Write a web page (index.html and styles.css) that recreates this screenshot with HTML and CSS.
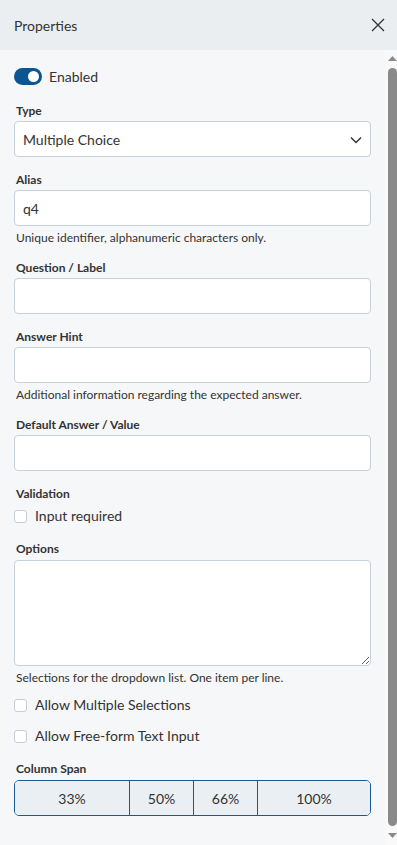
FILE: index.html
```html
<!DOCTYPE html>
<html lang="en">
<head>
    <meta charset="UTF-8">
    <meta name="viewport" content="width=device-width, initial-scale=1.0">
    <title>Properties</title>
    <link rel="stylesheet" href="styles.css">
</head>
<body>
    <div class="panel">
        <div class="panel-header">
            <span class="panel-title">Properties</span>
            <button class="close-btn" aria-label="Close">
                <svg width="14" height="14" viewBox="0 0 14 14">
                    <path d="M1 1L13 13M13 1L1 13" stroke="#333" stroke-width="1.3" fill="none"/>
                </svg>
            </button>
        </div>
        <div class="panel-main">
            <div class="panel-body">
                <label class="toggle-row">
                    <span class="toggle on"><span class="knob"></span></span>
                    <span>Enabled</span>
                </label>

                <div class="field">
                    <div class="field-label">Type</div>
                    <div class="select-wrap">
                        <select class="input">
                            <option>Multiple Choice</option>
                        </select>
                        <svg class="chevron" width="12" height="8" viewBox="0 0 12 8">
                            <path d="M1 1.5L6 6.5L11 1.5" stroke="#333" stroke-width="1.5" fill="none"/>
                        </svg>
                    </div>
                </div>

                <div class="field">
                    <div class="field-label">Alias</div>
                    <input class="input" type="text" value="q4">
                    <div class="help">Unique identifier, alphanumeric characters only.</div>
                </div>

                <div class="field">
                    <div class="field-label">Question / Label</div>
                    <input class="input" type="text">
                </div>

                <div class="field">
                    <div class="field-label">Answer Hint</div>
                    <input class="input" type="text">
                    <div class="help">Additional information regarding the expected answer.</div>
                </div>

                <div class="field">
                    <div class="field-label">Default Answer / Value</div>
                    <input class="input" type="text">
                </div>

                <div class="field">
                    <div class="field-label">Validation</div>
                    <label class="check-row first"><input type="checkbox"> Input required</label>
                </div>

                <div class="field">
                    <div class="field-label">Options</div>
                    <textarea class="input textarea"></textarea>
                    <div class="help">Selections for the dropdown list. One item per line.</div>
                    <label class="check-row spaced first-option"><input type="checkbox"> Allow Multiple Selections</label>
                    <label class="check-row spaced"><input type="checkbox"> Allow Free-form Text Input</label>
                </div>

                <div class="field">
                    <div class="field-label">Column Span</div>
                    <div class="span-group">
                        <button>33%</button>
                        <button>50%</button>
                        <button>66%</button>
                        <button>100%</button>
                    </div>
                </div>
            </div>
            <div class="scrollbar">
                <svg class="scroll-arrow up" width="12" height="15" viewBox="0 0 12 15">
                    <path d="M3 11L7.5 6L12 11Z" fill="#8a8a8a"/>
                </svg>
                <div class="scroll-thumb"></div>
                <svg class="scroll-arrow down" width="12" height="16" viewBox="0 0 12 16">
                    <path d="M3 4L7.5 9L12 4Z" fill="#8a8a8a"/>
                </svg>
            </div>
        </div>
    </div>
</body>
</html>
```

FILE: styles.css
```css
html, body {
    margin: 0;
    height: 100%;
}
body {
    font-family: Lato, "Open Sans", sans-serif;
    color: #333;
    background-color: #f6f7f9;
}
.panel {
    display: flex;
    flex-direction: column;
    height: 100vh;
}
.panel-header {
    flex: 0 0 50px;
    display: flex;
    align-items: center;
    justify-content: space-between;
    padding: 0 12px 0 14px;
    background-color: #ebeef1;
    box-sizing: border-box;
}
.panel-title {
    font-size: 14px;
}
.close-btn {
    border: none;
    background: none;
    padding: 0;
    display: flex;
    cursor: pointer;
}
.panel-main {
    flex: 1;
    display: flex;
    min-height: 0;
}
.panel-body {
    flex: 1;
    min-width: 0;
    overflow: hidden;
    padding: 18px 14px 42px 14px;
}

/* scrollbar */
.scrollbar {
    flex: 0 0 12px;
    display: flex;
    flex-direction: column;
    background-color: #f9f9fa;
}
.scroll-arrow {
    display: block;
    flex-shrink: 0;
}
.scroll-thumb {
    flex: 1;
    margin: 3px 0 3px 3px;
    border-radius: 5px;
    background-color: #8a8a8a;
}

.toggle-row {
    display: flex;
    align-items: center;
    gap: 7px;
    font-size: 14px;
    height: 17px;
    margin-bottom: 18px;
}
.toggle {
    width: 28px;
    height: 17px;
    border-radius: 9px;
    background-color: #0b5592;
    position: relative;
    flex-shrink: 0;
}
.toggle .knob {
    position: absolute;
    top: 3px;
    right: 3px;
    width: 11px;
    height: 11px;
    border-radius: 50%;
    background-color: #fff;
}
.field {
    margin-bottom: 15px;
}
.field-label {
    font-size: 12px;
    font-weight: bold;
    line-height: 16px;
    margin-bottom: 2px;
    padding-left: 2px;
}
.input {
    display: block;
    width: 100%;
    height: 36px;
    box-sizing: border-box;
    border: 1px solid #c8d0d9;
    border-radius: 4px;
    background-color: #fff;
    font-family: inherit;
    font-size: 14px;
    color: #333;
    padding: 0 8px;
    outline: none;
}
.select-wrap {
    position: relative;
}
.select-wrap select {
    appearance: none;
}
.chevron {
    position: absolute;
    right: 9px;
    top: 15px;
    pointer-events: none;
}
.textarea {
    height: 106px;
    resize: vertical;
    padding: 6px 8px;
    margin-top: 3px;
}
.help {
    font-size: 12px;
    line-height: 15px;
    margin-top: 4px;
    padding-left: 2px;
}
.check-row {
    display: flex;
    align-items: center;
    gap: 8px;
    font-size: 14px;
    line-height: 20px;
}
.check-row.first {
    margin-top: 4px;
}
.check-row.spaced {
    margin-top: 11px;
}
.check-row.first-option {
    margin-top: 10px;
}
.check-row input {
    appearance: none;
    margin: 0;
    width: 13px;
    height: 13px;
    border: 1px solid #c5ccd5;
    border-radius: 3px;
    background-color: #fff;
    box-sizing: border-box;
}
.span-group {
    display: grid;
    grid-template-columns: 114px 64px 64px 1fr;
    height: 36px;
    border: 1px solid #1a5a94;
    border-radius: 5px;
    overflow: hidden;
    margin-top: 3px;
    box-sizing: border-box;
}
.span-group button {
    border: none;
    border-left: 1px solid #1a5a94;
    background-color: #eaeff4;
    font-family: inherit;
    font-size: 14px;
    color: #333;
    padding: 0;
}
.span-group button:first-child {
    border-left: none;
}
```
